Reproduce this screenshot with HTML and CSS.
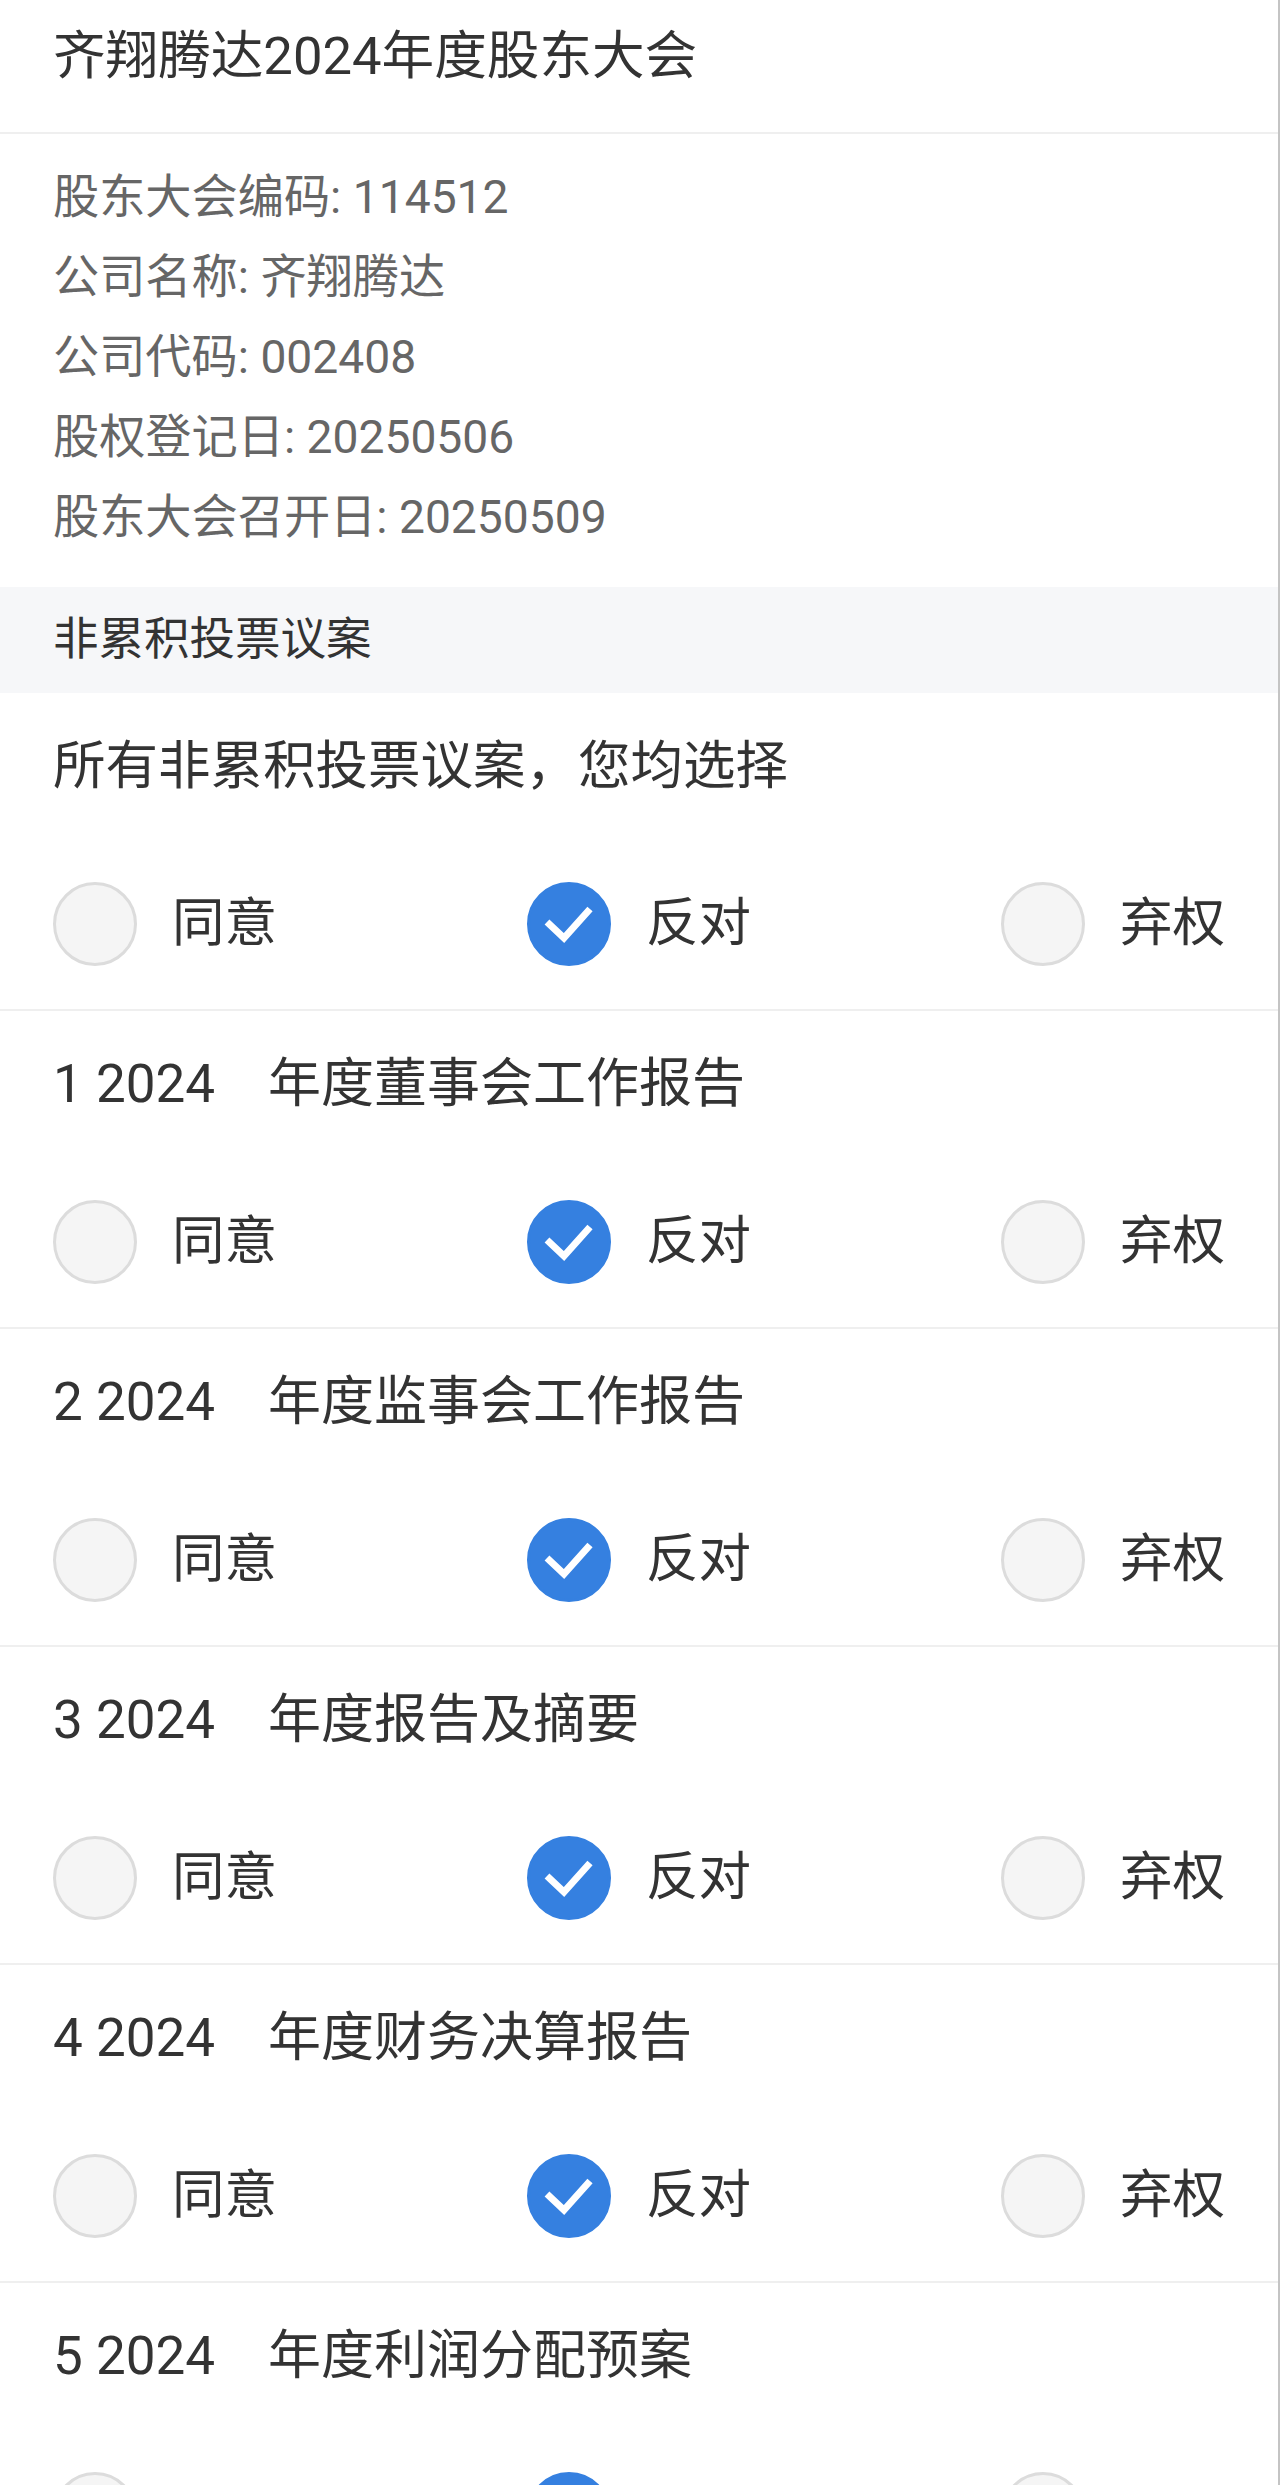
FILE: index.html
```html
<!DOCTYPE html>
<html lang="zh-CN">
<head>
<meta charset="utf-8">
<title>齐翔腾达2024年度股东大会</title>
<link rel="stylesheet" href="styles.css">
</head>
<body>
<div class="page">
  <header class="title-bar">
    <h1 class="title">齐翔腾达2024年度股东大会</h1>
  </header>

  <section class="info">
    <p>股东大会编码: 114512</p>
    <p>公司名称: 齐翔腾达</p>
    <p>公司代码: 002408</p>
    <p>股权登记日: 20250506</p>
    <p>股东大会召开日: 20250509</p>
  </section>

  <div class="section-head">非累积投票议案</div>

  <div class="block">
    <div class="q q-all">所有非累积投票议案，您均选择</div>
    <div class="opts">
      <div class="opt"><span class="radio"></span><span class="label">同意</span></div>
      <div class="opt"><span class="radio on"><svg viewBox="0 0 84 84" width="84" height="84"><path d="M20 40 L37 56 L63 27" /></svg></span><span class="label">反对</span></div>
      <div class="opt"><span class="radio"></span><span class="label">弃权</span></div>
    </div>
  </div>

  <div class="block">
    <div class="q">1 2024　年度董事会工作报告</div>
    <div class="opts">
      <div class="opt"><span class="radio"></span><span class="label">同意</span></div>
      <div class="opt"><span class="radio on"><svg viewBox="0 0 84 84" width="84" height="84"><path d="M20 40 L37 56 L63 27" /></svg></span><span class="label">反对</span></div>
      <div class="opt"><span class="radio"></span><span class="label">弃权</span></div>
    </div>
  </div>

  <div class="block">
    <div class="q">2 2024　年度监事会工作报告</div>
    <div class="opts">
      <div class="opt"><span class="radio"></span><span class="label">同意</span></div>
      <div class="opt"><span class="radio on"><svg viewBox="0 0 84 84" width="84" height="84"><path d="M20 40 L37 56 L63 27" /></svg></span><span class="label">反对</span></div>
      <div class="opt"><span class="radio"></span><span class="label">弃权</span></div>
    </div>
  </div>

  <div class="block">
    <div class="q">3 2024　年度报告及摘要</div>
    <div class="opts">
      <div class="opt"><span class="radio"></span><span class="label">同意</span></div>
      <div class="opt"><span class="radio on"><svg viewBox="0 0 84 84" width="84" height="84"><path d="M20 40 L37 56 L63 27" /></svg></span><span class="label">反对</span></div>
      <div class="opt"><span class="radio"></span><span class="label">弃权</span></div>
    </div>
  </div>

  <div class="block">
    <div class="q">4 2024　年度财务决算报告</div>
    <div class="opts">
      <div class="opt"><span class="radio"></span><span class="label">同意</span></div>
      <div class="opt"><span class="radio on"><svg viewBox="0 0 84 84" width="84" height="84"><path d="M20 40 L37 56 L63 27" /></svg></span><span class="label">反对</span></div>
      <div class="opt"><span class="radio"></span><span class="label">弃权</span></div>
    </div>
  </div>

  <div class="block">
    <div class="q">5 2024　年度利润分配预案</div>
    <div class="opts">
      <div class="opt"><span class="radio"></span><span class="label">同意</span></div>
      <div class="opt"><span class="radio on"><svg viewBox="0 0 84 84" width="84" height="84"><path d="M20 40 L37 56 L63 27" /></svg></span><span class="label">反对</span></div>
      <div class="opt"><span class="radio"></span><span class="label">弃权</span></div>
    </div>
  </div>
</div>
</body>
</html>
```

FILE: styles.css
```css
* {
  box-sizing: border-box;
  margin: 0;
  padding: 0;
}

html, body {
  background: #ffffff;
}

body {
  margin: 0;
  font-family: Roboto, "Noto Sans CJK SC", "Noto Sans", sans-serif;
  color: #333333;
  overflow: hidden;
}

.page {
  width: 1280px;
  min-height: 2485px;
  border-right: 2px solid #c4c4c4;
}

.title-bar {
  height: 134px;
  padding: 26px 53px 0;
  border-bottom: 2px solid #efefef;
}

.title {
  font-size: 52.6px;
  font-weight: 400;
  line-height: 60px;
  color: #333333;
}

.info {
  padding: 23px 53px 30px;
}

.info p {
  font-size: 46.2px;
  line-height: 80px;
  color: #666666;
}

.section-head {
  height: 106px;
  line-height: 106px;
  padding: 0 53px;
  background: #f6f7f9;
  font-size: 45.5px;
  color: #333333;
}

.block {
  border-bottom: 2px solid #efefef;
}

.q {
  height: 145px;
  display: flex;
  align-items: center;
  padding: 0 53px;
  font-size: 53px;
  line-height: 60px;
  color: #333333;
  white-space: pre;
}

.q-all {
  font-size: 52.5px;
}

.opts {
  height: 171px;
  display: flex;
  justify-content: space-between;
  align-items: center;
  padding: 0 53px;
}

.opt {
  display: flex;
  align-items: center;
  gap: 35px;
}

.radio {
  width: 84px;
  height: 84px;
  border-radius: 50%;
  background: #f5f5f5;
  border: 3px solid #dcdcdc;
  flex: none;
  position: relative;
}

.radio.on {
  background: #3580e0;
  border-color: #3580e0;
}

.radio svg {
  position: absolute;
  left: -3px;
  top: -3px;
  display: block;
}

.radio svg path {
  fill: none;
  stroke: #ffffff;
  stroke-width: 7;
  stroke-linecap: butt;
  stroke-linejoin: miter;
}

.label {
  font-size: 52.5px;
  line-height: 0.9;
  color: #333333;
}
```
